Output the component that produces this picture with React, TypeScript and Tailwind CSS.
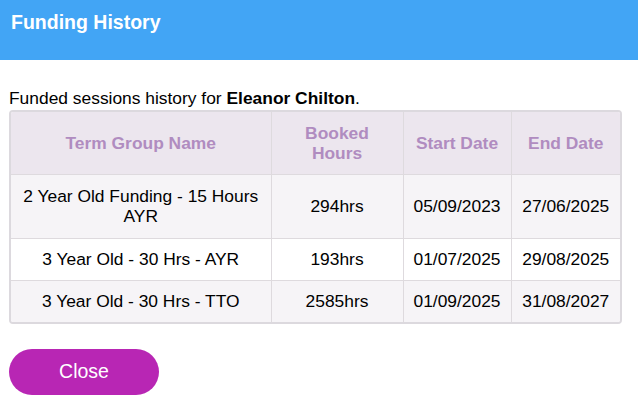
import React from "react";

const rows = [
  ["2 Year Old Funding - 15 Hours AYR", "294hrs", "05/09/2023", "27/06/2025"],
  ["3 Year Old - 30 Hrs - AYR", "193hrs", "01/07/2025", "29/08/2025"],
  ["3 Year Old - 30 Hrs - TTO", "2585hrs", "01/09/2025", "31/08/2027"],
];

export default function App() {
  return (
    <div className="w-[638px] h-[411px] bg-white font-['Liberation_Sans',Arial,sans-serif] text-black">
      <div className="h-[60px] bg-[#42a5f5] px-[11px] pt-[9px]">
        <h1 className="text-[19.5px] font-bold text-white leading-[26px]">Funding History</h1>
      </div>
      <div className="px-[9px] pt-[28px]">
        <p className="text-[17.4px] leading-[20px] mb-[2px]">
          Funded sessions history for <b>Eleanor Chilton</b>.
        </p>
        <div className="w-[613px] rounded-[4px] border-2 border-[#dcd9de] overflow-hidden">
          <table className="w-full border-collapse table-fixed text-[17.4px] leading-[20px]">
            <colgroup>
              <col className="w-[260px]" />
              <col className="w-[132px]" />
              <col className="w-[108px]" />
              <col />
            </colgroup>
            <thead>
              <tr className="bg-[#ece6ee] h-[62px]">
                {["Term Group Name", "Booked Hours", "Start Date", "End Date"].map((h, i) => (
                  <th
                    key={h}
                    className={`px-[10px] font-bold text-[#b08cc0] text-center ${i < 3 ? "border-r border-[#dedade]" : ""} ${h === "Booked Hours" ? "px-[20px]" : ""}`}
                  >
                    {h}
                  </th>
                ))}
              </tr>
            </thead>
            <tbody>
              {rows.map((r, ri) => (
                <tr
                  key={ri}
                  className={`${ri % 2 === 0 ? "bg-[#f6f4f7]" : "bg-white"} border-t border-[#dedade] ${ri === 0 ? "h-[64px]" : "h-[42px]"}`}
                >
                  {r.map((c, ci) => (
                    <td
                      key={ci}
                      className={`text-center ${ci === 0 ? "px-[10px]" : "px-[6px]"} ${ci < 3 ? "border-r border-[#dedade]" : ""}`}
                    >
                      {c}
                    </td>
                  ))}
                </tr>
              ))}
            </tbody>
          </table>
        </div>
        <button className="mt-[25px] w-[150px] h-[46px] rounded-full bg-[#b826b4] text-white text-[19.5px]">
          Close
        </button>
      </div>
    </div>
  );
}
